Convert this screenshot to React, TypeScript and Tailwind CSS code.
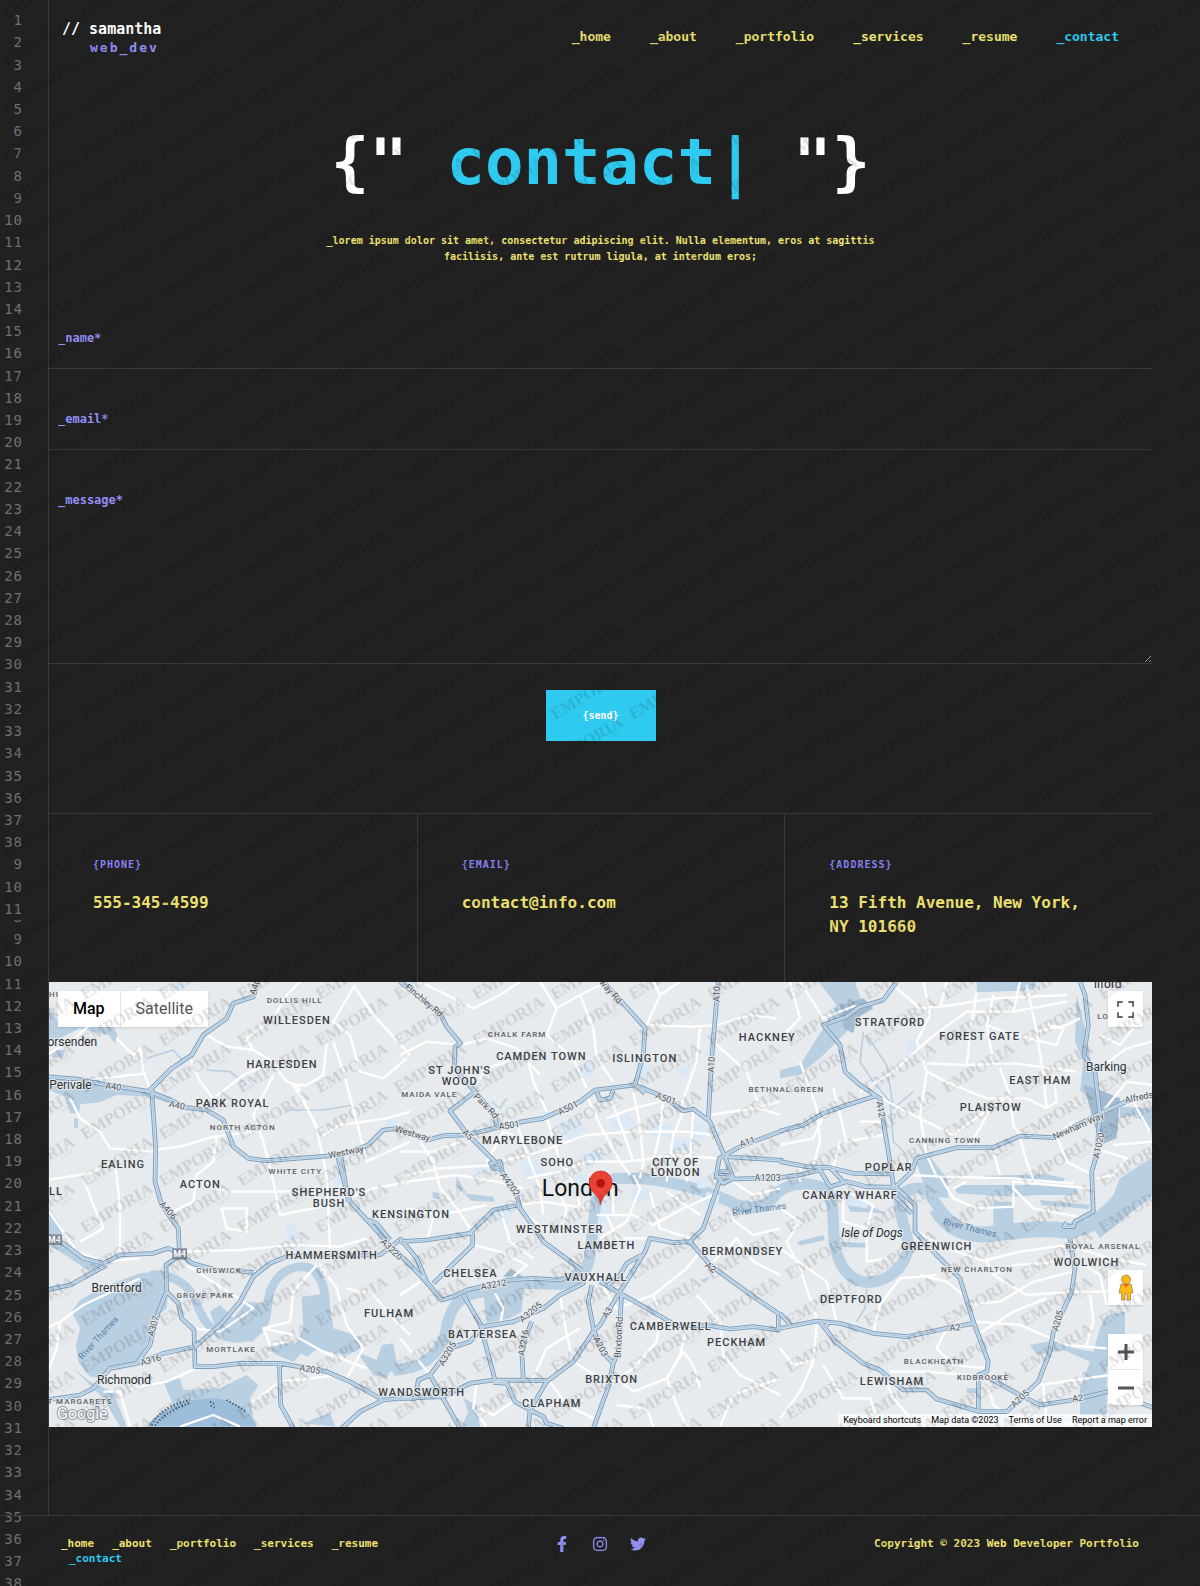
import { FaFacebookF, FaInstagram, FaTwitter } from 'react-icons/fa';

const navItems = ['_home', '_about', '_portfolio', '_services', '_resume', '_contact'];

const range = (from: number, to: number) =>
  Array.from({ length: to - from + 1 }, (_, i) => from + i);

const firstLines = [...range(1, 38), ...range(9, 11)];
const lastLines = range(9, 38);

// The map is drawn in three sheets that sit side by side, each with its own origin
const westRoads = [
  'M655 20L640 65L580 85L560 130L490 180L455 240L395 280L330 345',
  'M20 305L110 312L200 330L330 350L390 375L440 398L500 405L550 435L580 515L625 550L680 557L800 548L900 540L985 510L1030 465L1075 460L1150 490',
  'M335 345L347 520L345 620L365 690L415 760L418 830',
  'M20 780L70 805L130 850L190 865L240 840L340 835L385 820L420 835L455 865L530 885L640 892',
  'M20 945L90 930L200 870',
  'M420 840L378 870L380 950L355 1010L330 1110L290 1165L210 1180L160 1240L120 1260L20 1275',
  'M380 950L415 985L425 1030L462 1065L465 1175L520 1175L600 1165L720 1165L860 1190L930 1220L1030 1275L1130 1265',
  'M290 1165L370 1135L465 1115L540 1050L600 980L640 905L690 865L740 845L860 840L1020 840L1085 790',
  'M893 545L915 630L930 680L990 745L1040 800L1110 870',
  'M903 545L925 680',
  'M985 735L1010 745L1050 795',
  'M718 1165L722 1290L760 1360',
  'M1030 1275L960 1310L905 1360',
];

const centralRoads = [
  'M0 20L50 60L120 115L140 155L182 205L165 215L163 280L225 350L285 420L290 455',
  'M225 350L150 408L200 475L290 565L350 660L360 700L400 755L430 800L545 885',
  'M75 497L130 482L200 480L290 458L355 442L430 430L540 380L585 345L705 330L790 365L850 408L880 402L930 440L955 500L975 545L1000 610L970 625L948 605L958 550L1020 515L1150 466',
  'M605 15L660 75L735 158L730 240L705 330L735 355',
  'M955 20L935 250L925 430',
  'M975 545L1150 556',
  'M1000 612L1150 608',
  'M958 620L910 760L870 800L820 803L750 790L735 830L660 950L600 1050L580 1070L520 1160L440 1220L390 1305L385 1360',
  'M870 800L930 870L1060 965L1135 1015L1135 1065L1060 1055L990 1062L930 1052',
  'M0 800L80 795L210 775L280 705L355 690',
  'M218 775L218 810L100 925',
  'M0 790L50 850L80 920L125 975L160 965L200 945L330 915L400 910L480 915L540 890',
  'M0 840L60 900L125 975',
  'M520 885L550 925L480 960L430 1000L340 1040L250 1055',
  'M190 960L240 1045L285 1215',
  'M250 1055L210 1100L150 1120L90 1200L55 1215L45 1270L0 1270',
  'M90 1200L180 1360',
  'M50 1268L130 1265L210 1225L280 1215L445 1217',
  'M280 1222L320 1225L345 1280L390 1305L430 1325L440 1345L490 1360',
  'M575 930L565 980L580 1060L605 1130L640 1165',
  'M600 920L660 955L740 1000L830 1052L930 1052',
  'M665 955L655 1130L640 1165L625 1235L580 1360',
  'M625 930L660 900L680 865L725 840',
  'M395 1040L365 1120L370 1215',
  'M590 350L600 375L630 370L640 345',
  'M272 565L300 560L305 580L280 580Z',
  'M945 590L990 590L992 605L950 608',
];

const eastRoads = [
  'M350 20L310 75L240 95L200 125L130 150L180 210L195 290L240 330L300 370L310 440L325 530L340 630L405 690L405 770L470 840L540 910L580 1040L625 1160L620 1190L595 1200L595 1310',
  'M0 468L70 450L130 415L200 390L290 362',
  'M0 560L80 575L150 578L220 595L330 597',
  'M0 608L60 600L120 585L150 635L200 620L260 635L345 637L395 590L410 550L530 518L640 517L720 483L820 488L960 415L1050 375L1125 358',
  'M150 578L190 620',
  'M345 665L395 715',
  'M900 20L915 60L925 150L912 240L945 290L960 420L950 540L935 590L940 710L885 740L880 755L852 755L860 742',
  'M870 790L885 880L875 950L820 1070L810 1130L775 1220L680 1310L600 1310L470 1272L440 1245L370 1245L300 1185L250 1165L165 1100L120 1040',
  'M0 1060L110 1038L180 1045L280 1075L380 1085L500 1060L580 1045',
  'M130 1060L145 1045',
  'M620 1205L720 1260L780 1290L880 1275L990 1248',
  'M0 1015L30 1048',
  'M1085 1285L1125 1300',
];

const westStreets = [
  'M20 240L90 200L150 150L230 90L300 40',
  'M230 190L280 240L300 220L310 290L330 340',
  'M90 325L180 310L320 295',
  'M90 370L120 430L180 470L210 520L340 530',
  'M20 615L150 595L220 560L230 600L240 700L240 830',
  'M130 610L160 690L190 760L120 800',
  'M20 700L110 830L190 860L300 850',
  'M340 525L420 515L520 485L640 470',
  'M500 180L560 215L640 225L690 255L740 320L770 330L830 460L860 600L870 820',
  'M640 225L620 190L700 130L740 60L780 20',
  'M450 250L480 320L520 370L610 300L700 260',
  'M945 30L880 140L930 180L960 290L1030 310L1100 250',
  'M940 30L1000 120L1110 240',
  'M860 205L850 300L800 330L760 330L830 450',
  'M880 200L910 290L950 440L980 560L1110 500',
  'M700 300L640 420L670 500L700 620L720 720L870 690L1000 640L1110 620',
  'M530 485L520 560L470 600L460 680L380 720',
  'M460 610L560 650L730 650L870 640',
  'M545 700L560 760L620 770L620 700Z',
  'M430 830L600 825L760 810L900 815L980 790',
  'M440 870L640 1000L540 1070L460 1060',
  'M830 870L760 950L750 1040L670 1060L690 1110L740 1100',
  'M840 870L890 940L920 1050L970 1120L920 1210L960 1230',
  'M670 1060L760 1080L850 1130L980 1180',
  'M20 1060L60 1040L130 990L300 910',
  'M60 1040L50 1120L20 1200',
  'M190 1250L240 1250L270 1355',
  'M470 1180L380 1220L270 1240',
  'M840 490L900 450L1040 430L1110 410',
  'M920 940L1000 960L1060 1030L1110 1080',
  'M640 1280L720 1220L900 1200',
  'M420 1355L520 1320L600 1355',
];

const centralStreets = [
  'M60 20L140 60L220 100L300 60L360 20',
  'M0 240L80 200L180 210L260 190L350 220L420 300',
  'M220 340L260 280L380 240L400 320L440 410',
  'M420 20L470 100L540 60L600 30',
  'M470 100L440 180L520 250L560 340',
  'M540 60L580 160L590 250L640 320',
  'M735 150L880 155L950 150L1050 120L1130 130',
  'M740 150L780 60L840 20',
  'M780 60L760 20M900 160L890 260L840 400',
  'M940 200L1040 290L1080 400L1140 420',
  'M930 420L1060 400L1140 380',
  'M350 445L390 560L420 640L430 720',
  'M440 425L480 560L530 640L540 700',
  'M300 560L420 530L560 480L700 470L850 470L940 480',
  'M380 610L480 590L560 560L680 560L830 540L950 550',
  'M560 360L600 450L660 560L690 600',
  'M620 430L700 400L780 380',
  'M700 350L720 450L730 560L720 610',
  'M790 370L780 470L760 560M850 410L820 480L800 620',
  'M640 390L680 500L700 560M880 410L870 560L860 620',
  'M60 500L100 560L120 640L170 700L210 760',
  'M0 530L100 530L180 500M20 600L120 580L290 570',
  'M20 620L170 600L290 620L370 640',
  'M360 690L430 680L500 690L560 700',
  'M380 720L430 760L560 770M470 640L500 700L480 780',
  'M590 720L700 720L760 750L850 700L940 660',
  'M600 790L680 740L720 640L700 600',
  'M640 720L640 640M620 720L650 790L740 790',
  'M750 650L780 760L870 790M800 650L900 720',
  'M20 700L120 720L260 690M100 730L80 800',
  'M220 810L300 830L380 870L340 905M300 700L330 800L400 850',
  'M600 920L650 1000L760 960L860 880L900 830',
  'M760 960L780 1020L770 1100L700 1180L640 1220',
  'M890 960L960 1040L970 1140L1020 1200L1140 1260',
  'M860 1060L840 1140L800 1210L830 1290L860 1355',
  'M640 1200L700 1250L800 1210L850 1130L880 1170L900 1240',
  'M450 1220L500 1290L580 1330M520 1160L600 1210L640 1220',
  'M400 1210L440 1120L540 1060M480 960L500 1080L520 1160',
  'M0 1090L50 1150L90 1200M0 960L60 920',
  'M230 1220L220 1300L260 1355M340 1280L280 1320L240 1300',
  'M960 1355L1000 1260L1140 1210M650 1290L740 1300L760 1355',
  'M1000 620L1060 660L1140 640M980 720L1060 780L1140 760',
  'M940 860L1010 790L1060 860L1140 900',
  'M285 955L310 1000L300 1050M260 560L310 470L340 480',
];

const eastStreets = [
  'M30 20L60 130L0 190M60 20L130 130L230 90',
  'M350 40L420 100L520 90L640 70L860 60',
  'M240 350L340 290L450 190L560 110L700 110L860 80',
  'M430 20L450 120L410 200L440 290L520 330L620 370L740 370',
  'M590 50L570 180L560 270L440 265M740 30L770 170L790 300L800 400L740 370',
  'M770 170L860 150L900 130M620 150L700 180L830 210L850 160L800 150',
  'M660 280L690 360L700 450L720 480M560 270L700 265L890 290',
  'M440 290L420 420L440 540M290 362L380 410L520 480L600 420L690 360',
  'M640 380L600 460L560 520M800 400L830 380L820 300',
  'M880 440L830 480L860 560L940 600M720 490L740 560L760 610',
  'M400 600L480 605L520 670L590 700L700 695L700 620L930 640',
  'M440 540L470 605L700 610L880 625M640 530L660 600',
  'M700 640L760 700L920 730M560 620L520 640M0 510L100 490L140 400',
  'M60 260L110 400L120 500L100 570M160 340L200 500L310 480',
  'M180 500L160 575M240 440L310 440M60 570L60 620',
  'M190 650L190 740L260 760L280 690L200 650M260 760L260 860L320 850',
  'M0 700L60 740L20 800L60 880L110 1030M0 820L140 920L170 1040',
  'M110 1050L100 1160L60 1250L0 1330M0 1120L40 1170L100 1155',
  'M410 770L500 820L620 860L640 900L740 960L880 950L1000 950',
  'M620 855L720 830L860 810L990 850L1100 870',
  'M640 900L700 870L860 860M560 990L660 980L760 920L880 890',
  'M590 1040L720 1050L860 1110L980 1120M590 1080L700 1010L800 970',
  'M470 900L360 910L300 990L280 1070M420 900L500 920L550 960',
  'M500 1060L470 1120L520 1170L620 1180M330 1190L440 1190L560 1200',
  'M130 1170L190 1270L270 1270L300 1355M310 1200L340 1270L400 1340',
  'M620 1210L640 1290L740 1355M740 1260L780 1230L990 1200L1110 1240',
  'M930 960L940 1040L920 1110M790 1230L800 1340L900 1350',
  'M945 290L1040 220L1116 200M960 420L1040 320L1116 330',
  'M960 180L1020 210L1060 160M1000 510L1116 500M1000 400L1060 380L1110 470',
  'M945 520L1040 550L1000 600L950 610M500 20L480 100',
  'M640 60L620 150L640 260M700 110L720 20M880 850L960 900L980 990',
];

type Place = [string, number, number];

const districts: Place[] = [
  ['WILLESDEN', 771, 148], ['HARLESDEN', 726, 279], ['PARK ROYAL', 578, 396], ['EALING', 249, 578],
  ['ACTON', 481, 639], ["SHEPHERD'S", 867, 663], ['BUSH', 867, 695], ['KENSINGTON', 1113, 729],
  ['HAMMERSMITH', 875, 852], ['FULHAM', 1047, 1026], ['WANDSWORTH', 1145, 1263], ['LL', 48, 661],
  ['CAMDEN TOWN', 1504, 255], ['ISLINGTON', 1814, 260], ["ST JOHN'S", 1259, 297], ['WOOD', 1259, 329],
  ['MARYLEBONE', 1448, 508], ['SOHO', 1552, 572], ['CITY OF', 1907, 572], ['LONDON', 1907, 604],
  ['WESTMINSTER', 1559, 775], ['LAMBETH', 1699, 823], ['CHELSEA', 1291, 906], ['VAUXHALL', 1668, 917],
  ['BATTERSEA', 1328, 1090], ['CAMBERWELL', 1892, 1066], ['PECKHAM', 2090, 1113], ['BRIXTON', 1715, 1225],
  ['CLAPHAM', 1535, 1295], ['BERMONDSEY', 2107, 839], ['HACKNEY', 2182, 198], ['STRATFORD', 2550, 153],
  ['FOREST GATE', 2819, 194], ['EAST HAM', 3001, 327], ['PLAISTOW', 2852, 407], ['POPLAR', 2546, 588],
  ['CANARY WHARF', 2430, 673], ['GREENWICH', 2690, 825], ['WOOLWICH', 3139, 873], ['DEPTFORD', 2434, 983],
  ['LEWISHAM', 2556, 1229],
];

const suburbs: Place[] = [
  ['DOLLIS HILL', 764, 84], ['NORTH ACTON', 608, 466], ['WHITE CITY', 766, 597], ['CHISWICK', 537, 895],
  ['GROVE PARK', 496, 970], ['MORTLAKE', 573, 1131], ['T MARGARETS', 120, 1287], ['HI', 42, 66],
  ['CHALK FARM', 1431, 186], ['MAIDA VALE', 1168, 367], ['BETHNAL GREEN', 2239, 351],
  ['CANNING TOWN', 2715, 503], ['NEW CHARLTON', 2811, 890], ['ROYAL ARSENAL', 3189, 823],
  ['BLACKHEATH', 2682, 1167], ['KIDBROOKE', 2829, 1215], ['LO', 3189, 132],
];

const towns: Place[] = [
  ['orsenden', 97, 213], ['Perivale', 91, 342], ['Brentford', 230, 950], ['Richmond', 252, 1227],
  ['Barking', 3199, 289], ['Ilford', 3203, 38],
];

const roadNames: [string, number, number, number][] = [
  ['A40', 645, 45, -70], ['A40', 220, 344, 8], ['A40', 411, 400, 12], ['Westway', 918, 540, -12],
  ['Westway', 1118, 485, 16], ['A406', 384, 715, 48], ['A3220', 1055, 832, 45], ['A307', 340, 1062, -75],
  ['A316', 332, 1164, -16], ['A205', 810, 1192, 10], ['Finchley Rd', 1152, 85, 40], ['way Rd', 1712, 58, 48],
  ['Park Rd', 1338, 402, 46], ['A501', 1407, 460, -8], ['A501', 1584, 408, -26], ['A501', 1878, 380, 20],
  ['A5', 1283, 488, 45], ['A4202', 1410, 637, 55], ['A10', 2030, 66, -88], ['A10', 2014, 278, -87],
  ['A11', 2122, 510, -18], ['A1203', 2183, 619, 0], ['A3212', 1361, 938, -10], ['A3205', 1472, 1020, -40],
  ['A3205', 1222, 1145, -60], ['A3216', 1450, 1112, -80], ['A3', 1702, 1022, -55], ['A203', 1682, 1124, 62],
  ['Brixton Rd', 1736, 1096, -87], ['A2', 2012, 886, 38], ['A12', 2522, 412, 80],
  ['Newham Way', 3115, 462, -24], ['Alfreds', 3297, 376, -12], ['A1020', 3176, 520, -78],
  ['A205', 3053, 1046, -75], ['A2', 2745, 1067, -5], ['A205', 2940, 1280, -42], ['A2', 3113, 1279, -5],
];

const riverNames: [string, number, number, number][] = [
  ['River Thames', 175, 1097, -48], ['River Thames', 2158, 712, -8], ['River Thames', 2790, 768, 14],
];

function Sheet({ x, streets, roads }: { x: number; streets: string[]; roads: string[] }) {
  return (
    <g transform={`translate(${x} 0)`} fill="none" strokeLinejoin="round">
      <path d={streets.join('')} stroke="#ffffff" strokeWidth="7" />
      <path d={roads.join('')} stroke="#7b9fbe" strokeWidth="14" />
      <path d={roads.join('')} stroke="#d5e3ef" strokeWidth="8" />
      <path d={roads.join('')} stroke="#8fb0cc" strokeWidth="2" />
    </g>
  );
}

function LondonMap() {
  return (
    <svg
      viewBox="27 21 3309 1335"
      preserveAspectRatio="xMidYMid slice"
      className="block h-full w-full font-['Roboto',sans-serif]"
      role="img"
      aria-label="Map of London"
    >
      <rect x="0" y="0" width="3400" height="1400" fill="#e8ebed" />

      {/* Parks and water */}
      <g fill="#b9d0e3">
        <path d="M27 95L60 150L150 155L215 145L232 180L225 205L205 180L120 160L60 190L27 190ZM35 225L75 225L70 245L45 250Z" />
        <path d="M27 300L120 305L210 325L330 345L400 368L385 385L330 365L230 360L180 382L120 388L118 415L90 415L75 365L27 345ZM102 430h12v28h-12z" />
        <path d="M27 700L60 750L70 800L130 850L200 870L150 890L90 850L27 810Z" />
        <path d="M120 975L190 935L300 895L350 890L385 940L380 1000L345 1030L320 1110L290 1160L210 1175L190 1210L150 1205L115 1160L108 1110L120 1060L95 1010Z" />
        <path d="M510 1010L540 990L580 1030L620 980L680 985L670 1060L640 1100L580 1095L530 1070Z" />
        <path d="M785 965L865 955L880 1060L960 1085L965 1115L925 1140L830 1125L800 1145L760 1120L790 1060Z" />
        <path d="M680 1120L760 1100L790 1130L760 1160L710 1140ZM950 1130L1010 1155L1025 1110L1060 1105L1070 1165L1120 1165L1120 1195L1050 1190L1040 1210L1000 1200Z" />
        <path d="M370 1220L420 1210L430 1245L540 1240L620 1200L655 1230L630 1270L640 1330L660 1355L560 1300L400 1290ZM790 1345L870 1312L885 1355Z" />
        <path d="M100 1180L150 1220L220 1250L260 1355L240 1355L190 1270L140 1220Z" />
      </g>
      <path d="M320 1355C360 1295 450 1270 520 1270C600 1275 635 1320 650 1355Z" fill="#9dbedb" />
      <path d="M335 1350C360 1300 410 1285 450 1275M345 1352C375 1312 415 1296 450 1284M510 1280l15 8M512 1292l12 6M560 1275L620 1310" fill="none" stroke="#46586a" strokeWidth="6" strokeDasharray="4 6" />
      <g fill="none" stroke="#b9d0e3" strokeLinejoin="round">
        <path d="M330 900C400 895 450 930 470 985C490 1045 530 1088 590 1090C650 1090 680 1050 682 1000C685 920 730 875 790 875C850 880 860 960 855 1020" strokeWidth="26" />
        <path d="M1060 1185C1150 1180 1190 1140 1215 1085C1225 1010 1245 960 1330 950L1400 925L1480 925L1560 928C1620 920 1640 890 1648 850L1664 720C1668 650 1680 615 1730 610L1800 610C1900 620 1980 640 2060 675C2130 715 2180 700 2215 650C2260 620 2320 620 2360 645C2385 670 2378 760 2383 800C2395 880 2430 918 2485 922C2550 920 2600 870 2606 810C2600 770 2570 700 2580 665C2600 640 2640 630 2665 650C2690 690 2720 750 2800 776C2900 780 2980 750 3090 772C3150 765 3200 720 3240 670" strokeWidth="34" />
        <path d="M2690 700C2720 760 2780 780 2840 778C2920 770 3000 755 3090 768C3180 750 3220 700 3260 650" strokeWidth="48" />
      </g>
      <g fill="#b9d0e3">
        <path d="M1330 955L1450 935L1445 1010L1410 1030L1340 1045ZM1270 655L1360 665L1365 680L1295 677ZM1250 605L1270 640L1262 650L1248 630Z" />
        <path d="M1270 1270L1310 1290L1320 1355L1265 1355L1285 1310ZM1980 915L2010 905L1995 925ZM1178 650L1200 655L1195 672L1178 670Z" />
        <path d="M2335 20L2445 20L2465 80L2420 170L2350 240L2280 300L2220 310L2220 285L2280 270L2350 160L2390 90Z" />
        <path d="M2810 20L2990 20L2980 45L2810 52ZM3110 60L3140 180L3150 250L3180 330L3160 350L3120 350L3130 260L3105 200Z" />
        <path d="M3150 745L3220 660L3240 610L3340 545L3340 660L3240 740L3180 790Z" />
        <path d="M2745 630H2995L3110 640V660H2990L2920 665L2750 655ZM2830 602L3020 598L3075 610L3070 620L2850 612ZM3000 675L3150 690L3145 702L3005 690ZM2860 680h60v70h-60z" />
        <path d="M2630 560L2670 545L2720 610L2725 670L2660 660ZM2420 680L2480 690L2540 715L2430 710ZM2270 800L2350 780L2355 795L2280 812ZM2400 800L2480 805L2480 818L2400 815Z" />
        <path d="M2970 1110L3050 1095L3100 1120L3160 1130L3180 1060L3200 1020L3255 1010L3255 1100L3220 1140L3200 1180L3200 1320L3120 1320L3120 1240L3150 1160L3070 1125L2990 1140Z" />
        <path d="M3240 395L3340 400L3340 480L3290 420L3240 430ZM2780 1240h30v14h-30z" />
      </g>
      <path d="M2400 90L2470 70L2500 100L2450 130L2440 175L2410 160ZM3130 330L3180 345L3240 370L3230 490L3180 510L3150 400ZM1390 905L1412 880L1450 905Z" fill="#a3bbd0" />

      {/* Light patches around the centre */}
      <g fill="#dae9f5">
        <path d="M1540 450l60-20 40 30-50 40zM1440 560l60-10 20 50-60 20zM1620 540l50-20 30 40-60 20zM1700 430l60-20 30 40-70 20zM1840 440l60 10-10 40-60-10zM1890 490l70 0 0 30-60 10z" />
        <path d="M1360 700l60 10-20 40-50-20zM1580 600l60 0 10 50-60 10zM1770 640l60 0 10 30-60 20zM1960 430l40 20-10 50-40-20zM2000 650l40 10-10 40-40-10zM1610 270l40-10 10 40-40 10z" />
        <path d="M1780 260l60 10-30 40zM1900 280l50-10-10 40zM735 750l30-10 10 50-30 20zM880 590l20 0 0 40-20 0zM2430 650l60 20-10 30-60-10zM2600 200l40-10-10 40-30 5zM1300 560l30 0 10 40-30 0z" />
        <path d="M400 25l40 0-10 20-25 0zM1045 430l30 10-10 30-30-5zM1690 680l40 10-20 50-40 10zM1500 410l40 0 0 20-40 5zM3230 230l20 0-5 25-15 0zM1980 600l30 10-10 30-30 0z" />
      </g>
      <path d="M1355 380L1380 400L1400 370M2470 170L2460 260L2500 320L2550 380L2560 500L2600 540M2480 180L2540 270L2560 400L2620 350M2480 940L2475 1000L2450 1040M320 250L400 225L430 260M500 285L570 290L620 330M740 405L850 405L940 390" fill="none" stroke="#b9d0e3" strokeWidth="5" />

      <Sheet x={0} streets={westStreets} roads={westRoads} />
      <Sheet x={1080} streets={centralStreets} roads={centralRoads} />
      <Sheet x={2220} streets={eastStreets} roads={eastRoads} />

      {/* Names */}
      <g textAnchor="middle" stroke="#e8ebed" strokeWidth="6" strokeLinejoin="round" paintOrder="stroke">
        <g fontSize="27" fill="#4b5560">
          {roadNames.map(([name, x, y, turn]) => (
            <text key={`${name}-${x}`} x={x} y={y} transform={`rotate(${turn} ${x} ${y - 9})`}>{name}</text>
          ))}
        </g>
        <g fontSize="27" fill="#5880a5" stroke="none">
          {riverNames.map(([name, x, y, turn]) => (
            <text key={x} x={x} y={y} transform={`rotate(${turn} ${x} ${y - 9})`}>{name}</text>
          ))}
        </g>
        <g fontSize="24" fontWeight="500" letterSpacing="3" fill="#5a6066">
          {suburbs.map(([name, x, y]) => <text key={name} x={x} y={y}>{name}</text>)}
        </g>
        <g fontSize="33" fontWeight="500" letterSpacing="3" fill="#3c4248">
          {districts.map(([name, x, y]) => <text key={name} x={x} y={y}>{name}</text>)}
        </g>
        <g fontSize="36" fill="#2b3036">
          {towns.map(([name, x, y]) => <text key={name} x={x} y={y}>{name}</text>)}
          <text x="2496" y="787" fontStyle="italic">Isle of Dogs</text>
        </g>
        <text x="1621" y="664" fontSize="69" fill="#111111">London</text>
      </g>

      {/* Motorway shields */}
      <g fontSize="26" fontWeight="700" fill="#ffffff" textAnchor="middle">
        <rect x="20" y="778" width="46" height="32" fill="#7f8c99" />
        <text x="43" y="803">M4</text>
        <rect x="397" y="820" width="44" height="34" fill="#7f8c99" />
        <text x="419" y="847">M4</text>
      </g>

      {/* Pin */}
      <path d="M1682 688C1676 655 1648 655 1648 622A34 34 0 0 1 1716 622C1716 655 1688 655 1682 688Z" fill="#ea4335" stroke="#c5221f" strokeWidth="2" />
      <circle cx="1682" cy="625" r="13" fill="#b31412" />
    </svg>
  );
}

function MapPanel() {
  return (
    <div className="relative h-[445px] overflow-hidden font-['Roboto',sans-serif]">
      <LondonMap />

      <div className="absolute top-[9px] left-[9px] flex h-9 bg-white text-base shadow-sm">
        <button type="button" className="border-r border-gray-200 px-[15px] font-medium text-black">Map</button>
        <button type="button" className="px-[15px] text-[#565656]">Satellite</button>
      </div>

      <button type="button" aria-label="Toggle fullscreen view" className="absolute top-[9px] right-[9px] flex h-9 w-[35px] items-center justify-center bg-white shadow-sm">
        <svg viewBox="0 0 18 18" className="h-[17px] w-[17px]" fill="none" stroke="#666666" strokeWidth="2">
          <path d="M1 6V1H6M12 1H17V6M17 12V17H12M6 17H1V12" />
        </svg>
      </button>

      <div className="absolute right-[9px] bottom-[22px] flex flex-col gap-[29px]">
        <button type="button" aria-label="Street View" className="flex h-[35px] w-[35px] items-center justify-center bg-white shadow-sm">
          <svg viewBox="0 0 16 27" className="h-[27px] w-4">
            <path d="M3 10H13L15 19H12.500V26H9V20H7V26H3.500V19H1Z" fill="#fbb917" stroke="#8a7a55" strokeWidth="0.700" />
            <path d="M5 10H11L8 14Z" fill="#ef6c1a" />
            <circle cx="8" cy="5.500" r="4.500" fill="#fbb917" stroke="#8a7a55" strokeWidth="0.700" />
          </svg>
        </button>
        <div className="flex flex-col items-center bg-white shadow-sm">
          <button type="button" aria-label="Zoom in" className="flex h-[35px] w-[35px] items-center justify-center">
            <svg viewBox="0 0 16 16" className="h-4 w-4" stroke="#565656" strokeWidth="3">
              <path d="M8 0V16M0 8H16" />
            </svg>
          </button>
          <span className="h-px w-[29px] bg-gray-200" />
          <button type="button" aria-label="Zoom out" className="flex h-[35px] w-[35px] items-center justify-center">
            <svg viewBox="0 0 16 16" className="h-4 w-4" stroke="#565656" strokeWidth="3">
              <path d="M0 8H16" />
            </svg>
          </button>
        </div>
      </div>

      <svg viewBox="0 0 60 22" className="absolute bottom-[2px] left-[6px] h-[22px] w-[60px]">
        <text x="2" y="16" fontSize="16" fill="#ffffff" stroke="#8d969e" strokeWidth="2" paintOrder="stroke">Google</text>
      </svg>

      <div className="absolute right-0 bottom-0 flex h-[13px] items-center gap-[10px] bg-white/60 px-[5px] text-[9px] leading-none text-black">
        <button type="button">Keyboard shortcuts</button>
        <span>Map data ©2023</span>
        <a href="#terms">Terms of Use</a>
        <a href="#report">Report a map error</a>
      </div>
    </div>
  );
}

function Watermark() {
  return (
    <svg aria-hidden="true" className="pointer-events-none absolute inset-0 h-full w-full">
      <defs>
        <pattern id="mark" width="235" height="140" patternUnits="userSpaceOnUse" patternTransform="scale(0.3333)">
          {[-140, 0, 140].map((dy) =>
            [-235, 0].map((dx) => (
              <g key={`${dx}${dy}`} transform={`translate(${dx + 20} ${dy + 60}) rotate(-31)`} fontFamily="'Liberation Serif', serif">
                <text fontSize="50" fontWeight="700">EMPORIA</text>
                <text x="185" y="14" fontSize="14">LOGO</text>
              </g>
            )),
          )}
        </pattern>
      </defs>
      <rect width="100%" height="100%" fill="url(#mark)" opacity="0.12" />
    </svg>
  );
}

function Gutter() {
  return (
    <div
      aria-hidden="true"
      className="col-start-1 row-span-2 row-start-1 h-0 min-h-full overflow-hidden pt-[9px] text-right text-sm leading-none tracking-[1px] text-[#707070]"
    >
      <div className="flex h-[calc(100%+8px)] flex-col pr-[25px]">
        {firstLines.map((n, i) => (
          <div key={i} className="flex min-h-0 flex-1 items-center justify-end">{n}</div>
        ))}
        <div className="h-2">
          <div className="flex h-1 items-end justify-end overflow-hidden">8</div>
        </div>
        {lastLines.map((n) => (
          <div key={n} className="flex min-h-0 flex-1 items-center justify-end">{n}</div>
        ))}
      </div>
    </div>
  );
}

function Detail({ title, children }: { title: string; children: string }) {
  return (
    <div className="border-l border-[#3a3a3a] px-11 pt-[43px] pb-[43px] first:border-l-0">
      <h2 className="text-[10px] leading-4 font-bold tracking-widest text-[#8480f0]">{title}</h2>
      <p className="mt-[18px] text-base leading-6 font-bold text-[#ece071]">{children}</p>
    </div>
  );
}

const field =
  'block w-full border-b border-[#3a3a3a] bg-transparent px-[9px] text-xs leading-4 font-bold text-white placeholder:text-[#938ff5] placeholder:opacity-100 focus:outline-none';

export default function App() {
  return (
    <div className="relative grid min-h-screen grid-cols-[48px_minmax(0,1fr)] grid-rows-[1fr_auto] overflow-hidden bg-[#212121] font-['DejaVu_Sans_Mono','Liberation_Mono',monospace]">
      <Gutter />

      <main className="col-start-2 row-start-1 border-l border-[#3a3a3a] pr-12 pb-[88px]">
        <header className="flex justify-between pt-5 pr-[33px] pl-[13px]">
          <a href="#home" className="block leading-5 font-bold">
            <span className="block text-[15px] leading-[18px] text-white">// samantha</span>
            <span className="block pl-7 text-[13px] tracking-[2px] text-[#938ff5]">web_dev</span>
          </a>
          <nav className="flex gap-[39px] pt-[7px] text-[13px] leading-5 font-bold">
            {navItems.map((item) => (
              <a key={item} href={`#${item.slice(1)}`} className="text-[#ece071] last:text-[#2ecaf0]">{item}</a>
            ))}
          </nav>
        </header>

        <h1 className="mt-16 text-center text-[64px] leading-[80px] font-bold whitespace-pre text-white">
          {'{"'} <span className="text-[#2ecaf0]">contact|</span> {'"}'}
        </h1>
        <p className="mx-auto mt-[31px] max-w-[570px] text-center text-[10px] leading-4 font-bold text-[#ece071]">
          _lorem ipsum dolor sit amet, consectetur adipiscing elit. Nulla elementum, eros at sagittis facilisis, ante est rutrum ligula, at interdum eros;
        </p>

        <form className="mt-[43px] flex flex-col gap-5">
          <input type="text" aria-label="Name" placeholder="_name*" className={`${field} h-[61px]`} />
          <input type="email" aria-label="Email" placeholder="_email*" className={`${field} h-[61px]`} />
          <textarea aria-label="Message" placeholder="_message*" className={`${field} h-[194px] resize-y pt-[22px]`} />
          <button type="submit" className="mx-auto mt-[6px] h-[51px] w-[110px] bg-[#2ecaf0] text-[10px] font-bold text-white">
            {'{send}'}
          </button>
        </form>

        <section className="mt-[72px] grid grid-cols-3 border-t border-[#3a3a3a]">
          <Detail title="{PHONE}">555-345-4599</Detail>
          <Detail title="{EMAIL}">contact@info.com</Detail>
          <Detail title="{ADDRESS}">13 Fifth Avenue, New York, NY 101660</Detail>
        </section>

        <MapPanel />
      </main>

      <footer className="col-span-2 col-start-1 row-start-2 grid grid-cols-[1fr_auto_1fr] border-t border-[#3a3a3a] px-[52px] py-5 text-[11px] leading-[15px] font-bold text-[#ece071]">
        <nav className="max-w-[360px]">
          {navItems.map((item) => (
            <a key={item} href={`#${item.slice(1)}`} className="inline-block px-[9px] last:pl-[17px] last:text-[#2ecaf0]">{item}</a>
          ))}
        </nav>
        <div className="flex gap-[22px] text-base text-[#938ff5]">
          <a href="#facebook" aria-label="Facebook"><FaFacebookF /></a>
          <a href="#instagram" aria-label="Instagram"><FaInstagram /></a>
          <a href="#twitter" aria-label="Twitter"><FaTwitter /></a>
        </div>
        <p className="pr-[9px] text-right">Copyright © 2023 Web Developer Portfolio</p>
      </footer>

      <Watermark />
    </div>
  );
}
